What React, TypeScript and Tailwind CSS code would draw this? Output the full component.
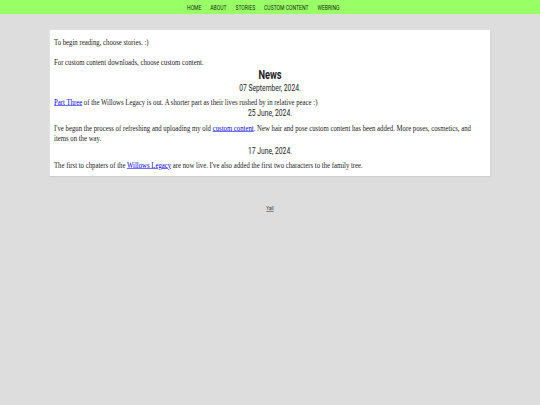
import React from 'react';

const navItems = ['Home', 'About', 'Stories', 'Custom Content', 'Webring'];

const serif = "font-['Liberation_Serif',serif]";
const sans = "font-['Roboto','Liberation_Sans',sans-serif]";

const NewsDate = ({ children, className = '' }: { children: React.ReactNode; className?: string }) => (
  <div className={`${sans} text-center text-[16px] leading-[18px] ${className}`}>{children}</div>
);

export default function App() {
  return (
    <div className="w-[540px] h-[405px] overflow-hidden">
      {/* page is laid out at 1280x720 and squeezed into the 540x405 frame */}
      <div className="w-[1280px] h-[720px] bg-[#dddddd] origin-top-left scale-x-[0.421875] scale-y-[0.5625] text-[#222]">
        <nav className="h-[25px] bg-[#99ff66] flex items-center justify-center gap-[21px] pr-[32px]">
          {navItems.map(item => (
            <a key={item} className={`${sans} uppercase text-[12px] text-[#1c2a12] cursor-pointer`}>
              {item}
            </a>
          ))}
        </nav>

        <div className={`w-[1044px] mx-auto mt-[28px] bg-white px-[10px] pt-[13px] pb-[11px] ${serif} text-[16px] leading-[19.5px] shadow-[1px_1px_2px_rgba(0,0,0,0.08)]`}>
          <div className="leading-[18px]">
            To begin reading, choose stories. :)
            <br />
            <br />
            For custom content downloads, choose custom content.
          </div>

          <h2 className={`${sans} font-bold text-center text-[22px] leading-[25px] mt-[1px]`}>News</h2>

          <NewsDate className="mt-[2px]">07 September, 2024.</NewsDate>
          <p className="mt-[5px]">
            <a className="text-[#0000ee] underline cursor-pointer">Part Three</a> of the Willows Legacy is out. A shorter part as their lives rushed by in relative peace :)
          </p>

          <NewsDate className="mt-[2px]">25 June, 2024.</NewsDate>
          <p className="mt-[6px]">
            I've begun the process of refreshing and uploading my old <a className="text-[#0000ee] underline cursor-pointer">custom content</a>. New hair and pose custom content has been added. More poses, cosmetics, and items on the way.
          </p>

          <NewsDate className="mt-[3px]">17 June, 2024.</NewsDate>
          <p className="mt-[6px]">
            The first to chpaters of the <a className="text-[#0000ee] underline cursor-pointer">Willows Legacy</a> are now live. I've also added the first two characters to the family tree.
          </p>
        </div>

        <div className="flex justify-center mt-[50px]">
          <a className={`${sans} text-[11px] text-[#333] underline cursor-pointer`}>Yall</a>
        </div>
      </div>
    </div>
  );
}
